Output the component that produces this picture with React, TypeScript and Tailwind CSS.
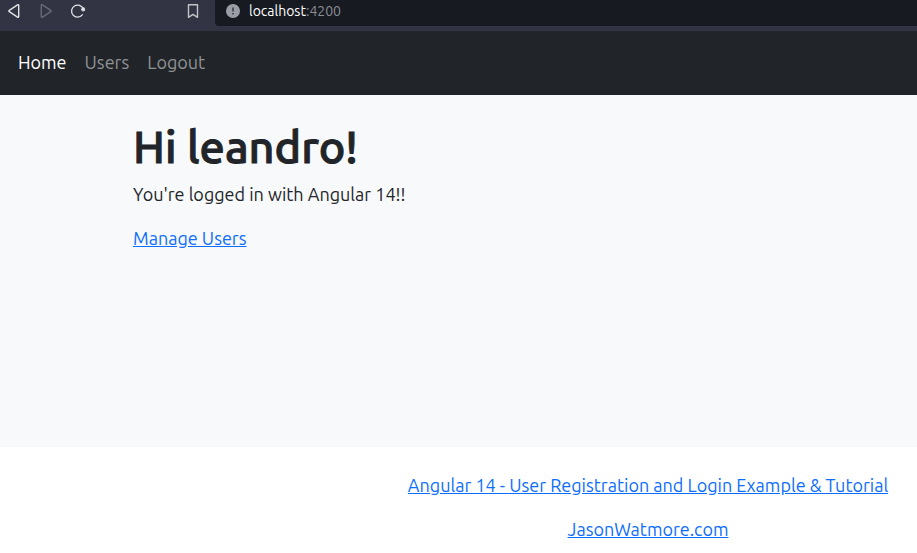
import React from "react";

function BrowserBar() {
  return (
    <header className="flex h-[31px] items-start bg-[#323443] text-[#e2e3e6]">
      <div className="flex h-[22px] w-[215px] shrink-0 items-center pr-[14px] pl-[5px]">
        <button type="button" aria-label="Back" className="mr-[14px]">
          <svg width="18" height="18" viewBox="0 0 18 18" fill="none" stroke="currentColor" strokeWidth="1.4" strokeLinejoin="round">
            <path d="M12.5 2.8c.6-.4 1.2-.1 1.2.6v11.2c0 .7-.6 1-1.2.6L4.300 9.700c-.5-.4-.5-1 0-1.400z" />
          </svg>
        </button>
        <button type="button" aria-label="Forward" disabled className="mr-[14px] text-[#686a78]">
          <svg width="18" height="18" viewBox="0 0 18 18" fill="none" stroke="currentColor" strokeWidth="1.4" strokeLinejoin="round">
            <path d="M5.500 2.800c-.6-.4-1.200-.1-1.200.6v11.200c0 .7.6 1 1.200.6l8.200-5.500c.5-.4.5-1 0-1.400z" />
          </svg>
        </button>
        <button type="button" aria-label="Reload">
          <svg width="18" height="18" viewBox="0 0 18 18" fill="none" stroke="currentColor" strokeWidth="1.3" strokeLinecap="round">
            <path d="M14.200 7A6 6 0 1 0 13.300 12.800" />
            <path d="M12.300 7.200l2.700-1.600.8 2.600-1.600.8z" fill="currentColor" strokeWidth="1" strokeLinejoin="round" />
          </svg>
        </button>
        <button type="button" aria-label="Bookmark" className="ml-auto text-[#c3c4ca]">
          <svg width="16" height="18" viewBox="0 0 16 18" fill="none" stroke="currentColor" strokeWidth="1.4" strokeLinejoin="round">
            <path d="M3.500 2.700h9v12.600L8 12.300l-4.500 3z" />
          </svg>
        </button>
      </div>
      <div className="flex h-[26px] flex-1 items-start rounded-bl bg-[#171a21] pl-[11px]">
        <div className="flex h-[22px] items-center">
          <svg width="14" height="14" viewBox="0 0 14 14" aria-hidden="true">
            <circle cx="7" cy="7" r="7" fill="#9b9da6" />
            <path d="M7 3.500v4M7 9v1.500" stroke="#3b3e49" strokeWidth="1.6" />
          </svg>
          <p className="pl-[9px] text-sm leading-5 text-[#8b8d93]">
            <span className="text-white">localhost</span>:4200
          </p>
        </div>
      </div>
    </header>
  );
}

const linkStyle = "text-[#0d6efd] underline";

export default function App() {
  return (
    <div className="min-h-screen bg-white font-['Ubuntu','Noto_Sans',sans-serif] text-lg leading-7 text-[#212529]">
      <BrowserBar />
      <nav className="flex h-16 items-center gap-[18px] bg-[#212529] px-[18px] pb-[2px] text-[#909294]">
        <a href="#home" className="text-white">Home</a>
        <a href="#users">Users</a>
        <a href="#logout">Logout</a>
      </nav>
      <main className="min-h-[352px] bg-[#f8f9fa] pt-[26px] pr-4 pl-[133px]">
        <h1 className="mb-[7px] text-[45px] leading-[52px] font-medium [-webkit-text-stroke:1px]">Hi leandro!</h1>
        <p className="mb-4">You're logged in with Angular 14!!</p>
        <p>
          <a href="#users" className={linkStyle}>Manage Users</a>
        </p>
      </main>
      <footer className="pt-6 pl-[379px] text-center">
        <p className="mb-4">
          <a href="#tutorial" className={linkStyle}>Angular 14 - User Registration and Login Example &amp; Tutorial</a>
        </p>
        <p>
          <a href="#site" className={linkStyle}>JasonWatmore.com</a>
        </p>
      </footer>
    </div>
  );
}
